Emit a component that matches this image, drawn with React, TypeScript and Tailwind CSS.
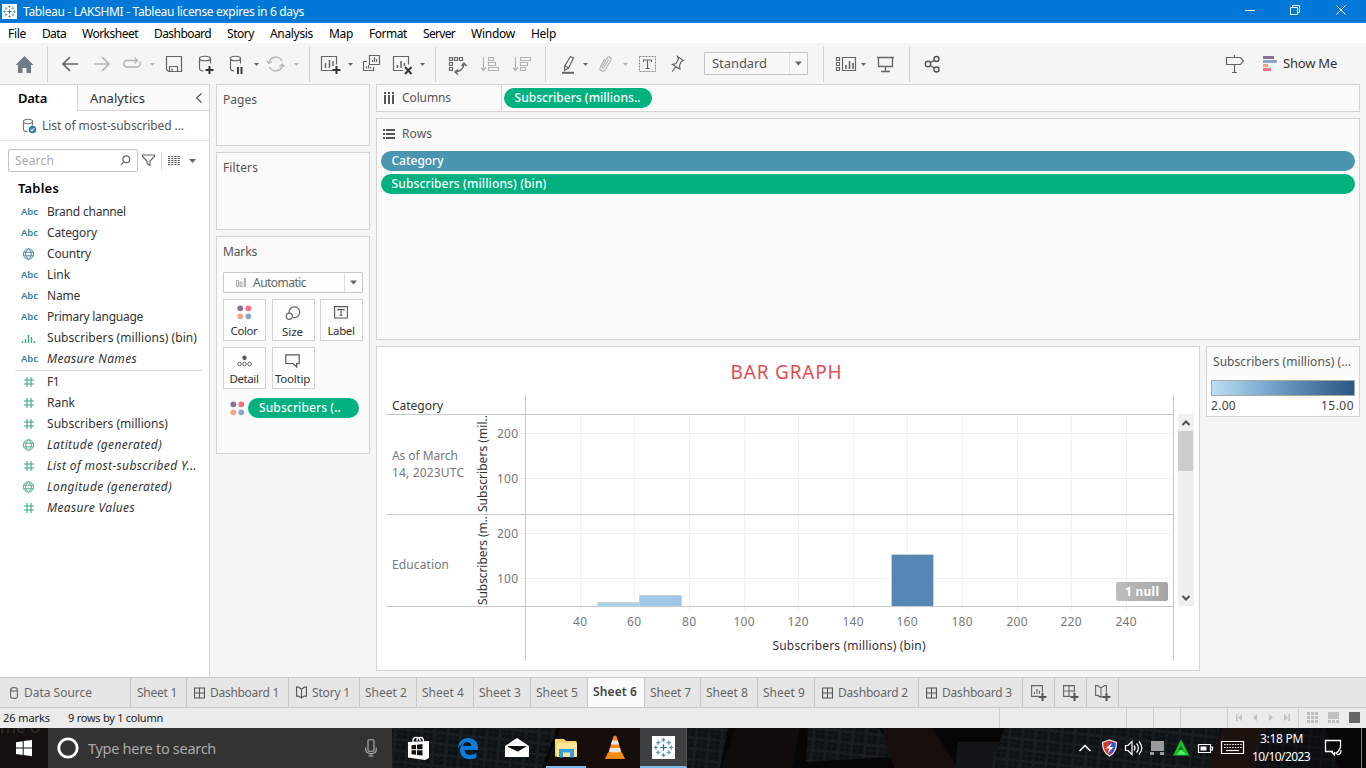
import { useLayoutEffect, useRef, useState } from "react";
import type { ReactNode } from "react";

/* Single-line label whose tracking is adjusted so that it spans `w` pixels. */
function T({ w, className = "", children }: { w: number; className?: string; children: string }) {
  const ref = useRef<HTMLSpanElement>(null);
  const [spacing, setSpacing] = useState(0);
  useLayoutEffect(() => {
    if (ref.current) {
      const natural = ref.current.getBoundingClientRect().width;
      setSpacing((w - natural) / children.length);
    }
  }, []);
  return (
    <span className={"block shrink-0 whitespace-nowrap " + className} style={{ width: w }}>
      <span ref={ref} className="inline-block whitespace-pre" style={{ letterSpacing: spacing }}>
        {children}
      </span>
    </span>
  );
}

/* Toolbar slot: spans x..x+w of the toolbar, its drawing uses toolbar coordinates. */
function Slot({ x, w, children }: { x: number; w: number; children: ReactNode }) {
  return (
    <svg className="block shrink-0" width={w} height={41} viewBox={`${x} 43 ${w} 41`} fill="none" stroke="#666" strokeWidth="1.2">
      {children}
    </svg>
  );
}
const Sep = ({ x }: { x: number }) => <path d={`M${x + 0.5} 47V82`} stroke="#d0d0d0" strokeWidth="1" />;
const Caret = ({ x, c = "#666" }: { x: number; c?: string }) => <path d={`M${x} 63h5l-2.500 3z`} fill={c} stroke="none" />;

function TableauMark({ size }: { size: number }) {
  const plus = (x: number, y: number, r: number, c: string, k: string) => (
    <path key={k} d={`M${x - r} ${y}h${2 * r}M${x} ${y - r}v${2 * r}`} stroke={c} strokeWidth="1.3" />
  );
  return (
    <svg className="block shrink-0 bg-white" width={size} height={size} viewBox="0 0 24 24" fill="none">
      {plus(12, 12, 3.5, "#2c6a99", "c")}
      {plus(12, 4, 2, "#4f89b4", "n")}
      {plus(12, 20, 2, "#4f89b4", "s")}
      {plus(4, 12, 2, "#4f89b4", "w")}
      {plus(20, 12, 2, "#4f89b4", "e")}
      {plus(6.5, 6.8, 2.2, "#5f95bd", "nw")}
      {plus(17.5, 6.8, 2.2, "#5f95bd", "ne")}
      {plus(6.5, 17.2, 2.2, "#5f95bd", "sw")}
      {plus(17.5, 17.2, 2.2, "#5f95bd", "se")}
    </svg>
  );
}

function TitleBar() {
  return (
    <header className="flex h-[23px] items-center bg-[#0078d7] pl-[2px] text-white">
      <TableauMark size={15} />
      <T w={281} className="ml-[6px] text-[12px] leading-[22px]">Tableau - LAKSHMI - Tableau license expires in 6 days</T>
      <div className="flex-1" />
      <svg className="block h-[23px] w-[138px]" viewBox="1228 0 138 23" fill="none" stroke="#fff" strokeWidth="1">
        <path d="M1245 10.500h10M1290.500 7.500h7v7h-7zM1292.500 7.500v-2h7v7h-2M1336.500 5.500l9 9M1345.500 5.500l-9 9" />
      </svg>
    </header>
  );
}

const menus: [string, number][] = [
  ["File", 18], ["Data", 24], ["Worksheet", 56], ["Dashboard", 57], ["Story", 27], ["Analysis", 43],
  ["Map", 24], ["Format", 38], ["Server", 32], ["Window", 44], ["Help", 25],
];

function MenuBar() {
  return (
    <nav className="flex h-[20px] gap-4 bg-white pl-2 text-[12px] leading-[22px] text-black">
      {menus.map(([m, w]) => <T key={m} w={w}>{m}</T>)}
    </nav>
  );
}

function Toolbar() {
  const light = "#b4b4b4";
  return (
    <div className="flex h-[41px] bg-[#f5f5f5]">
      <Slot x={0} w={48}>
        <path d="M24.500 56l9 9h-2.500v8h-4.500v-5h-4v5h-4.500v-8h-2.500z" fill="#6f7a87" stroke="none" />
        <Sep x={47} />
      </Slot>
      <Slot x={48} w={38}><path d="M78 64H63M70 57l-7 7 7 7" strokeWidth="1.700" /></Slot>
      <Slot x={86} w={30}><path d="M94 64h15M102 57l7 7-7 7" stroke={light} strokeWidth="1.600" /></Slot>
      <Slot x={116} w={44}>
        <path d="M131 60.500h-4.500a3.300 3.300 0 0 0 0 6.500h10.500a3.300 3.300 0 0 0 2.500-5.500M131 60.500h5.500M134.500 57.500l3 3-3 3" stroke={light} strokeWidth="1.300" />
        <Caret x={150} c={light} />
      </Slot>
      <Slot x={160} w={30}><path d="M166.500 56.500h15v15h-13l-2-2zM169.500 71v-4.500h8V71M172 71v-2.500" /></Slot>
      <Slot x={190} w={32}>
        <path d="M199.500 58.500v10c0 1.500 1.500 2.200 4 2.500M210.500 58.500v5M199.500 58.500c0-3 11-3 11 0s-11 3-11 0z" />
        <path d="M209.500 66v8M205.500 70h8" stroke="#333" strokeWidth="2" />
      </Slot>
      <Slot x={222} w={40}>
        <path d="M230.500 58.500v10c0 1.500 1 2.200 3.500 2.500M240.500 58.500v5M230.500 58.500c0-3 10-3 10 0s-10 3-10 0z" />
        <path d="M238 67v7M241.500 67v7" stroke="#333" strokeWidth="1.900" />
        <Caret x={254} />
      </Slot>
      <Slot x={262} w={48}>
        <path d="M269 62.500a7 7 0 0 1 13-1.500M282.500 65.500a7 7 0 0 1-13 1.500M267 61l2 2.500 3-2M279.500 66.500l3-2.500 2 3" stroke={light} strokeWidth="1.300" />
        <Caret x={294} c={light} />
        <Sep x={309} />
      </Slot>
      <Slot x={310} w={48}>
        <path d="M333 70.500h-11.500v-14h15v8" />
        <path d="M325.500 68v-5M329.500 68v-8M333 66v-5" strokeWidth="1.500" />
        <path d="M336.500 66v8M332.500 70h8" stroke="#333" strokeWidth="2" />
        <Caret x={348} />
      </Slot>
      <Slot x={358} w={28}>
        <path d="M369.500 55.500h10v9h-10zM367 61.500h-3.500v9h10V67M372.500 62v-2M374.500 62v-5M376.500 62v-3M366.500 68.500v-2M368.500 68.500V65M370.500 68.500V67" />
      </Slot>
      <Slot x={386} w={50}>
        <path d="M403 70.500h-9.500v-14h15v8" />
        <path d="M397.500 68v-3M401 68v-7M404.500 66v-3" strokeWidth="1.500" />
        <path d="M405 67l6.500 7M411.500 67l-6.500 7" stroke="#333" strokeWidth="1.900" />
        <Caret x={420} />
        <Sep x={435} />
      </Slot>
      <Slot x={436} w={38}>
        <path d="M449.500 57.500h3v3h-3zM454.500 57.500h3v3h-3zM459.500 57.500h3v3h-3zM449.500 62.500h3v3h-3zM449.500 67.500h3v3h-3z" />
        <path d="M464 64c-.5 5-4 7.500-8.500 8M461.500 66l2.500-3 2.500 3M458 69.500l-3 2.500 3 2.500" strokeWidth="1.400" />
      </Slot>
      <Slot x={474} w={32}>
        <path d="M483.500 57v13M481 67.500l2.500 3 2.500-3M488.500 57.500h5v3h-5zM488.500 62.500h7v3h-7zM488.500 67.500h10v3h-10z" stroke={light} />
      </Slot>
      <Slot x={506} w={40}>
        <path d="M515.500 57v13M513 67.500l2.500 3 2.500-3M520.500 57.500h10v3h-10zM520.500 62.500h7v3h-7zM520.500 67.500h5v3h-5z" stroke={light} />
        <Sep x={545} />
      </Slot>
      <Slot x={546} w={46}>
        <path d="M570.500 56.500l3 1.500-5 10-4 2.500.2-4.500zM564.700 65.500l3.800 2.500" />
        <path d="M562 72.800h12" strokeWidth="2" />
        <Caret x={583} />
      </Slot>
      <Slot x={592} w={42}>
        <path d="M608.500 59.500l-4.500 8c-.8 1.200-2.200.4-1.600-.8l4.500-8.500c1.500-2.500 5-1 3.800 1.800l-5.200 9.500c-2 3-6.500 1.500-5.300-2l4.600-8.500" stroke={light} />
        <Caret x={623} c={light} />
      </Slot>
      <Slot x={634} w={28}>
        <path d="M639.500 56.500h16v15h-16z" strokeDasharray="2 1" stroke="#888" strokeWidth="1" />
        <path d="M643.500 62v-2h8v2M647.500 60v8M645.500 68.500h4" />
      </Slot>
      <Slot x={662} w={42}>
        <path d="M677.500 56.500l6 4-2 .8-2 4 .5 3.700-7.500-4.500 3.500-1 2.500-4.500zM676 66.500l-4 5" />
      </Slot>
      <div className="mt-[9px] flex h-[23px] w-[104px] rounded-[1px] border border-[#c4c4c4] bg-[#f8f8f8]">
        <div className="pl-[7px]"><T w={55} className="text-[13px] leading-[20px] text-[#555]">Standard</T></div>
        <div className="ml-[22px] flex flex-1 items-center justify-center border-l border-[#e0e0e0]">
          <svg className="block h-[5px] w-[7px]" viewBox="0 0 7 5"><path d="M0 .5h7L3.500 4.500z" fill="#666" /></svg>
        </div>
      </div>
      <Slot x={808} w={16}><Sep x={823} /></Slot>
      <Slot x={824} w={48}>
        <path d="M836.500 57.500h3v3h-3zM836.500 62.500h3v3h-3zM836.500 67.500h3v3h-3zM842.500 57.500h13v13h-13z" />
        <path d="M846 69v-4M849.500 69v-8M853 69v-6" strokeWidth="1.600" />
        <Caret x={861} />
      </Slot>
      <Slot x={872} w={38}>
        <path d="M877 57.500h17M878.500 57.500v9h14v-9M885.500 66.500v5M881 71.500h9" strokeWidth="1.300" />
        <Sep x={909} />
      </Slot>
      <Slot x={910} w={40}>
        <g stroke="#555" strokeWidth="1.400">
          <circle cx="928" cy="64" r="2.700" /><circle cx="936.500" cy="59" r="2.500" /><circle cx="936.500" cy="69.500" r="2.500" />
          <path d="M930.500 62.500l3.800-2.200M930.300 65.500l4 2.500" />
        </g>
      </Slot>
      <div className="flex-1" />
      <Slot x={1222} w={30}><path d="M1234.500 55v2.500M1226.500 57.500h14l3 3.500-3 3.500h-14zM1234.500 64.500v7.500M1232 72.500h5" /></Slot>
      <Slot x={1252} w={31}>
        <g stroke="none">
          <path d="M1263 56h11v3h-11z" fill="#8a7199" /><path d="M1263 60h14v3h-14z" fill="#86a5cf" />
          <path d="M1263 64h5v3h-5z" fill="#f4a77e" /><path d="M1263 68h8v3h-8z" fill="#f8707f" />
        </g>
      </Slot>
      <T w={54} className="mr-[29px] text-[13px] leading-[40px] text-[#333]">Show Me</T>
    </div>
  );
}

type Kind = "abc" | "globe" | "num" | "bin";
function FieldIcon({ kind, green }: { kind: Kind; green?: boolean }) {
  const c = green ? "#3fa67e" : "#3a7f9c";
  if (kind === "abc") return <T w={17} className="pt-px text-[9.500px] font-semibold text-[#3a7f9c]">Abc</T>;
  return (
    <svg className="mt-px block h-[12px] w-[17px] shrink-0" viewBox="0 0 17 12" fill="none" stroke={c} strokeWidth="1.100">
      {kind === "globe" && <path d="M7.500 .8a5.200 5.200 0 1 1 0 10.400a5.200 5.200 0 1 1 0-10.400zM7.500 .8c-3.800 3-3.800 7.400 0 10.400c3.800-3 3.800-7.400 0-10.400M3 4.200h9M3 7.800h9" strokeWidth=".9" />}
      {kind === "num" && <path d="M6 1v10M10 1v10M3 4h10M3 8h10" />}
      {kind === "bin" && <path d="M1.500 9v2M4.500 7v4M7.500 3v8M10.500 5v6M13.500 9v2" strokeWidth="1.400" />}
    </svg>
  );
}

const dims: [Kind, string, number, boolean, boolean][] = [
  ["abc", "Brand channel", 79, false, false], ["abc", "Category", 50, false, false], ["globe", "Country", 44, false, false],
  ["abc", "Link", 23, false, false], ["abc", "Name", 33, false, false], ["abc", "Primary language", 96, false, false],
  ["bin", "Subscribers (millions) (bin)", 150, true, false], ["abc", "Measure Names", 90, false, true],
];
const meas: [Kind, string, number, boolean, boolean][] = [
  ["num", "F1", 12, true, false], ["num", "Rank", 28, true, false], ["num", "Subscribers (millions)", 121, true, false],
  ["globe", "Latitude (generated)", 115, true, true], ["num", "List of most-subscribed Y...", 150, true, true],
  ["globe", "Longitude (generated)", 125, true, true], ["num", "Measure Values", 88, true, true],
];

function FieldList({ items }: { items: typeof dims }) {
  return (
    <ul>
      {items.map(([k, name, w, g, it]) => (
        <li key={name} className="flex h-[21px] items-center pl-[21px]">
          <FieldIcon kind={k} green={g} />
          <T w={w} className={it ? "ml-[9px] text-[12px] leading-[18px] text-[#333] italic" : "ml-[9px] text-[12px] leading-[18px] text-[#333]"}>{name}</T>
        </li>
      ))}
    </ul>
  );
}

function DataPane() {
  return (
    <aside className="flex w-[210px] shrink-0 flex-col border-t border-r border-[#d4d4d4] bg-white">
      <div className="flex h-[26px] text-[13px] leading-[26px]">
        <div className="w-[77px] pl-[18px] text-black"><T w={29} className="font-semibold">Data</T></div>
        <div className="flex flex-1 items-center border-b border-l border-[#d4d4d4] bg-[#fafafa] pl-[12px] text-[#333]">
          <T w={55}>Analytics</T>
          <svg className="ml-[50px] block h-[10px] w-[8px]" viewBox="0 0 8 10" fill="none" stroke="#555" strokeWidth="1.200"><path d="M6.500 .5L1.500 5l5 4.500" /></svg>
        </div>
      </div>
      <div className="flex h-[30px] items-center border-b border-[#e0e0e0] pl-[22px]">
        <svg className="block h-[16px] w-[15px]" viewBox="0 0 15 16" fill="none" stroke="#777" strokeWidth="1.100">
          <path d="M1.500 3.500v8c0 1.500 1.500 2 4 2M10.500 3.500v4M1.500 3.500c0-3 9-3 9 0s-9 3-9 0z" />
          <circle cx="10.500" cy="11.500" r="3.800" fill="#2f7f9f" stroke="none" />
          <path d="M8.700 11.500l1.300 1.300 2.300-2.500" stroke="#fff" />
        </svg>
        <T w={142} className="ml-[5px] text-[12px] text-[#555]">List of most-subscribed ...</T>
      </div>
      <div className="mt-[8px] flex h-[23px] items-center pl-[8px]">
        <div className="flex h-[23px] w-[130px] items-center rounded-[2px] border border-[#c4c4c4] pl-[6px]">
          <T w={39} className="text-[12px] leading-[20px] text-[#aaa]">Search</T>
          <svg className="ml-[66px] block h-[11px] w-[11px]" viewBox="0 0 11 11" fill="none" stroke="#666" strokeWidth="1.200"><circle cx="6.300" cy="4.300" r="3.400" /><path d="M3.800 6.800L.8 9.800" /></svg>
        </div>
        <svg className="ml-[4px] block h-[13px] w-[13px]" viewBox="0 0 13 13" fill="none" stroke="#666" strokeWidth="1.200"><path d="M.6 1h11.800v1.500L8 7v4.500L5 9.500V7L.6 2.500z" /></svg>
        <div className="ml-[6px] h-[18px] w-px bg-[#d4d4d4]" />
        <svg className="ml-[6px] block h-[10px] w-[29px]" viewBox="0 0 29 10" fill="none" stroke="#555"><path d="M0 .5h12M0 2.500h12M0 4.500h12M0 6.500h12M0 8.500h12" strokeDasharray="2.200 1" /><path d="M21 3h7l-3.500 4z" fill="#666" stroke="none" /></svg>
      </div>
      <div className="mt-[5px] mb-[2px] pl-[18px] text-[13px] leading-[22px] text-black"><T w={41} className="font-semibold">Tables</T></div>
      <FieldList items={dims} />
      <div className="ml-[15px] mt-px h-px w-[187px] bg-[#d8d8d8]" />
      <FieldList items={meas} />
    </aside>
  );
}

const Dots = () => (
  <svg className="block h-[15px] w-[15px] shrink-0" viewBox="0 0 15 15">
    <circle cx="3.300" cy="3.300" r="2.900" fill="#8a7199" /><circle cx="11.300" cy="3.300" r="2.900" fill="#f8707f" />
    <circle cx="3.300" cy="11.300" r="2.900" fill="#f4a77e" /><circle cx="11.300" cy="11.300" r="2.900" fill="#86a5cf" />
  </svg>
);

function MarkButton({ label, w, children }: { label: string; w: number; children: ReactNode }) {
  return (
    <div className="flex h-[42px] flex-col items-center border border-[#d4d4d4] bg-[#fdfdfd] pt-[5px] pr-px">
      <div className="flex h-[17px] items-center">{children}</div>
      <T w={w} className="mt-[2px] text-[11.500px] leading-[18px] text-[#333]">{label}</T>
    </div>
  );
}

function Shelves() {
  const card = "border border-[#d4d4d4] bg-[#fafafa] pl-[6px]";
  return (
    <div className="ml-[6px] flex w-[154px] shrink-0 flex-col gap-[6px] text-[12px] leading-[30px] text-[#555]">
      <section className={"h-[62px] " + card}><T w={34}>Pages</T></section>
      <section className={"h-[78px] " + card}><T w={35}>Filters</T></section>
      <section className={"h-[218px] " + card}>
        <T w={34}>Marks</T>
        <div className="mt-[5px] flex h-[21px] w-[140px] items-center rounded-[1px] border border-[#c8c8c8] bg-[#fdfdfd] text-[#666]">
          <svg className="ml-[12px] block h-[11px] w-[10px]" viewBox="0 0 10 11" fill="none" stroke="#aaa"><path d="M.5 3.500h2v6h-2zM4 5h2v4.500H4z" /><path d="M8.800 1v9" strokeWidth="2" /></svg>
          <T w={53} className="ml-[7px] leading-[20px]">Automatic</T>
          <div className="ml-auto flex h-full w-[18px] items-center justify-center border-l border-[#ddd]">
            <svg className="block h-[5px] w-[7px]" viewBox="0 0 7 5"><path d="M0 .5h7L3.500 4.500z" fill="#666" /></svg>
          </div>
        </div>
        <div className="mt-[6px] grid grid-cols-[43px_43px_43px] gap-[6px] gap-x-[5.500px]">
          <MarkButton label="Color" w={27}><Dots /></MarkButton>
          <MarkButton label="Size" w={21}>
            <svg className="block h-[16px] w-[16px]" viewBox="0 0 16 16" fill="none" stroke="#666" strokeWidth="1.200"><path d="M4 8a5.400 5.400 0 1 1 4 4.500" /><circle cx="4.300" cy="11.300" r="3.100" /></svg>
          </MarkButton>
          <MarkButton label="Label" w={27}>
            <svg className="block h-[13px] w-[14px]" viewBox="0 0 14 13" fill="none" stroke="#555" strokeWidth="1.100"><path d="M.6.600h12.800v11.400H.6zM4 4.800V3.500h6v1.300M7 3.500v5.500M5.500 9.300h3" /></svg>
          </MarkButton>
          <MarkButton label="Detail" w={29}>
            <svg className="block h-[12px] w-[15px]" viewBox="0 0 15 12" fill="none" stroke="#666"><circle cx="7.500" cy="2.800" r="2.200" fill="#555" stroke="none" /><circle cx="2.500" cy="9" r="1.800" /><circle cx="7.500" cy="9" r="1.800" /><circle cx="12.500" cy="9" r="1.800" /></svg>
          </MarkButton>
          <MarkButton label="Tooltip" w={35}>
            <svg className="block h-[14px] w-[15px]" viewBox="0 0 15 14" fill="none" stroke="#555" strokeWidth="1.200"><path d="M.8.800h13.400v8.700h-2.500v3.500L8 9.500H.8z" /></svg>
          </MarkButton>
        </div>
        <div className="mt-[9px] ml-[7px] flex h-[20px] items-center gap-[3px]">
          <Dots />
          <div className="h-[20px] w-[111px] rounded-full bg-[#00b180] pl-[11px] leading-[20px] text-white"><T w={82} className="font-medium">Subscribers (..</T></div>
        </div>
      </section>
    </div>
  );
}

const ticks: [number, number][] = [[580, 40], [634, 60], [689, 80], [744, 100], [798, 120], [853, 140], [907, 160], [962, 180], [1017, 200], [1071, 220], [1126, 240]];

function Chart() {
  return (
    <svg className="block shrink-0" width="800" height="276" viewBox="377 394 800 276" fontSize="12" fill="#787878">
      <g stroke="#f0f0f0">
        {ticks.map(([x]) => <path key={x} d={`M${x + 0.5} 415V610`} />)}
        {[433.5, 478.5, 533.5, 578.5].map((y) => <path key={y} d={`M520 ${y}H1173`} />)}
      </g>
      <g stroke="#d0d0d0">
        <path d="M597.500 606v-3.500h42V606" fill="#a9d2ee" />
        <path d="M639.500 606v-10.500h42V606" fill="#9fc8e8" />
        <path d="M891.500 606v-51.500h42V606" fill="#5686b6" />
      </g>
      <g stroke="#c9c9c9">
        <path d="M386 414.500h788M386 514.500h788M386 606.500h788M525.500 394v267M1173.500 394v267" />
      </g>
      {ticks.map(([x, v]) => <text key={v} x={x} y="626" textAnchor="middle" textLength={v > 99 ? 21 : 14}>{v}</text>)}
      <text x="497" y="438" textLength="21">200</text>
      <text x="497" y="483" textLength="21">100</text>
      <text x="497" y="538" textLength="21">200</text>
      <text x="497" y="583" textLength="21">100</text>
      <text x="392" y="410" textLength="51" fill="#333">Category</text>
      <text x="392" y="460" textLength="66">As of March</text>
      <text x="392" y="477" textLength="72">14, 2023UTC</text>
      <text x="392" y="569" textLength="57">Education</text>
      <text x="772.500" y="650" textLength="153" fill="#333">Subscribers (millions) (bin)</text>
      <text transform="translate(487 512) rotate(-90)" textLength="97" fill="#333">Subscribers (mil..</text>
      <text transform="translate(487 605) rotate(-90)" textLength="89" fill="#333">Subscribers (m..</text>
      <rect x="1116" y="582" width="52" height="19" rx="2.500" fill="url(#nullFill)" />
      <text x="1125" y="596" textLength="34" fontWeight="700" fill="#fff">1 null</text>
      <defs><linearGradient id="nullFill"><stop stopColor="#bdbdbd" /><stop offset="1" stopColor="#a5a5a5" /></linearGradient></defs>
    </svg>
  );
}

function Workspace() {
  return (
    <main className="ml-[6px] flex w-[984px] shrink-0 flex-col gap-[6px] text-[12px] text-[#555]">
      <section className="flex h-[28px] border border-[#d4d4d4] bg-[#fafafa] leading-[26px]">
        <div className="flex w-[125px] items-center border-r border-[#d4d4d4] pl-[7px]">
          <svg className="block h-[12px] w-[10px]" viewBox="0 0 10 12" fill="none" stroke="#555" strokeWidth="2"><path d="M1 0v2M5 0v2M9 0v2M1 3v9M5 3v9M9 3v9" /></svg>
          <T w={49} className="ml-[8px]">Columns</T>
        </div>
        <div className="mt-[3px] ml-[2px] h-[20px] w-[148px] rounded-full bg-[#00b180] pl-[10.500px] leading-[20px] text-white"><T w={126} className="font-medium">Subscribers (millions..</T></div>
      </section>
      <section className="h-[222px] border border-[#d4d4d4] bg-[#fafafa] px-[4px]">
        <div className="flex h-[32px] items-center pb-[3px] pl-[2px]">
          <svg className="block h-[10px] w-[12px]" viewBox="0 0 12 10" fill="none" stroke="#555" strokeWidth="2"><path d="M0 1h2M0 5h2M0 9h2M3 1h9M3 5h9M3 9h9" /></svg>
          <T w={30} className="ml-[7px] leading-[26px]">Rows</T>
        </div>
        <div className="h-[20px] rounded-full bg-[#4996b2] pl-[10.500px] leading-[20px] text-white"><T w={52} className="font-medium">Category</T></div>
        <div className="mt-[3px] h-[20px] rounded-full bg-[#00b180] pl-[10.500px] leading-[20px] text-white"><T w={155} className="font-medium">Subscribers (millions) (bin)</T></div>
      </section>
      <div className="flex items-start gap-[6px]">
        <section className="h-[325px] w-[824px] border border-[#d4d4d4] bg-white">
          <div className="h-[47px] pl-[353.500px] text-[19px] leading-[50px] text-[#df4e55]"><T w={112}>BAR GRAPH</T></div>
          <div className="flex">
            <Chart />
            <div className="mt-[20px] ml-px flex h-[192px] w-[16px] flex-col bg-[#f0f0f0]">
              <svg className="block h-[17px] w-[16px]" viewBox="0 0 16 17" fill="none" stroke="#505050" strokeWidth="2"><path d="M4.500 11l3.500-3.500 3.500 3.500" /></svg>
              <div className="h-[40px] w-[15px] bg-[#cdcdcd]" />
              <svg className="mt-auto block h-[17px] w-[16px]" viewBox="0 0 16 17" fill="none" stroke="#505050" strokeWidth="2"><path d="M4.500 7l3.500 3.500L11.500 7" /></svg>
            </div>
          </div>
        </section>
        <section className="h-[71px] w-[154px] border border-[#d4d4d4] bg-white">
          <div className="h-[29px] bg-[#fafafa] pl-[6px] leading-[30px]"><T w={138}>Subscribers (millions) (...</T></div>
          <div className="mt-[4px] ml-[4px] h-[16px] w-[144px] border border-[#aaa89a] bg-linear-to-r from-[#bce0f4] via-[#75a6cd] via-40% to-[#2a5783]" />
          <div className="flex justify-between pr-[5px] pl-[4px] leading-[20px] text-[#444]"><T w={25}>2.00</T><T w={33}>15.00</T></div>
        </section>
      </div>
    </main>
  );
}

type TabKind = "sheet" | "dash" | "story" | "source" | "active";
const tabs: [string, string, number, TabKind][] = [
  ["Data Source", "w-[131px] pl-[10px]", 68, "source"], ["Sheet 1", "w-[56px] pl-[6px]", 40, "sheet"], ["Dashboard 1", "w-[102px] pl-[7px]", 69, "dash"],
  ["Story 1", "w-[71px] pl-[7px]", 38, "story"], ["Sheet 2", "w-[57px] pl-[5px]", 42, "sheet"], ["Sheet 4", "w-[57px] pl-[5px]", 42, "sheet"],
  ["Sheet 3", "w-[57px] pl-[5px]", 42, "sheet"], ["Sheet 5", "w-[57px] pl-[5px]", 42, "sheet"], ["Sheet 6", "w-[57px] pl-[5px]", 44, "active"],
  ["Sheet 7", "w-[56px] pl-[5px]", 41, "sheet"], ["Sheet 8", "w-[57px] pl-[5px]", 42, "sheet"], ["Sheet 9", "w-[57px] pl-[5px]", 42, "sheet"],
  ["Dashboard 2", "w-[104px] pl-[7px]", 70, "dash"], ["Dashboard 3", "w-[104px] pl-[7px]", 70, "dash"],
];
const gridPath = "M.6.600h10.800v10.800H.6zM6 .6v10.800M.6 6h10.800";
const bookPath = "M.6.600h2L6 3l3.400-2.400h2v9.800h-2L6 12.300l-3.400-1.900h-2zM6 3v9";

function SheetTabs() {
  return (
    <div className="flex h-[31px] border-y border-[#c8c8c8] bg-[#e6e6e6] text-[12px] leading-[30px] text-[#666]">
      {tabs.map(([name, box, w, kind]) => (
        <div key={name} className={"flex shrink-0 items-center border-r border-[#c8c8c8] " + box + (kind === "active" ? " bg-[#fbfbfb] pb-[2px] font-semibold leading-[26px] text-[#444]" : "")}>
          {kind === "source" && <svg className="mr-[6px] block h-[12px] w-[8px]" viewBox="0 0 8 12" fill="none" stroke="#666" strokeWidth="1.100"><path d="M.6 2.500v7c0 2.500 6.800 2.500 6.800 0v-7M.6 2.500c0-2.500 6.800-2.500 6.800 0s-6.800 2-6.800 0z" /></svg>}
          {kind === "dash" && <svg className="mr-[5px] block h-[12px] w-[11px]" viewBox="0 0 12 12" fill="none" stroke="#555" strokeWidth="1.200"><path d={gridPath} /></svg>}
          {kind === "story" && <svg className="mr-[5px] block h-[13px] w-[11px]" viewBox="0 0 12 13" fill="none" stroke="#555" strokeWidth="1.200"><path d={bookPath} /></svg>}
          <T w={w}>{name}</T>
        </div>
      ))}
      {["M.6.600h10.800v10.800H.6zM3.500 9V7M6 9V4M8.500 9V5.500", gridPath, bookPath].map((d) => (
        <div key={d} className="flex w-[32px] shrink-0 items-center justify-center border-r border-[#c8c8c8]">
          <svg className="block h-[16px] w-[16px]" viewBox="0 0 16 16" fill="none" stroke="#666" strokeWidth="1.100">
            <path d={d} /><path d="M11.500 7.500v8M7.500 11.500h8" stroke="#e6e6e6" strokeWidth="4" /><path d="M11.500 8v8M7.500 12h8" strokeWidth="2" stroke="#555" />
          </svg>
        </div>
      ))}
    </div>
  );
}

function StatusBar() {
  return (
    <div className="flex h-[20px] bg-[#ebebeb] pl-[3px] text-[11px] leading-[20px] text-[#222]">
      <T w={47}>26 marks</T>
      <T w={95} className="ml-[18px]">9 rows by 1 column</T>
      <svg className="ml-auto block" width="376" height="20" viewBox="990 708 376 20" fill="#c0c0c0">
        <path d="M999.500 708v20M1126.500 708v20M1153.500 708v20M1180.500 708v20M1227.500 708v20M1298.500 708v20" stroke="#cdcdcd" />
        <path d="M1236 714h1.500v7h-1.500zM1242 714v7l-4-3.500zM1257 714v7l-4-3.500zM1269 714v7l4-3.500zM1284 714v7l4-3.500zM1288.500 714h1.500v7h-1.500z" />
        <path d="M1307 712h3v3h-3zM1311 712h3v3h-3zM1315 712h3v3h-3zM1307 716h3v3h-3zM1311 716h3v3h-3zM1315 716h3v3h-3zM1307 720h3v3h-3zM1311 720h3v3h-3zM1315 720h3v3h-3z" />
        <path d="M1328 712h11v7h-11zM1328 720h3v3h-3zM1332 720h3v3h-3zM1336 720h3v3h-3z" />
        <path d="M1349 712h11v11h-11z" fill="#666" />
      </svg>
    </div>
  );
}

function Wallpaper() {
  return (
    <svg className="absolute inset-0 block h-full w-full" viewBox="0 0 1366 40" preserveAspectRatio="none">
      <defs>
        <pattern id="plaid" width="13" height="11" patternUnits="userSpaceOnUse" patternTransform="rotate(6)">
          <rect width="13" height="11" fill="#0d1114" /><path d="M0 3h13M4 0v11" stroke="#1c2327" strokeWidth="2.500" opacity=".7" /><path d="M0 8h13M10 0v11" stroke="#151b1f" />
        </pattern>
      </defs>
      <rect width="1366" height="40" fill="#060606" />
      <rect width="48" height="40" fill="#15100e" />
      <text x="0" y="4.500" fontSize="17" fill="#322b28">me o</text>
      <path d="M392 0h165l-15 40H392z" fill="url(#plaid)" />
      <path d="M560 0h80v40h-95z" fill="#150d0a" />
      <path d="M686 0h42l-8 40h-34z" fill="url(#plaid)" />
      <path d="M735 0h65l-8 40h-70z" fill="#110b09" />
      <path d="M808 0h70l25 28-97 6z" fill="url(#plaid)" />
      <path d="M882 0h50l26 40h-64z" fill="#170d0a" />
      <path d="M958 14h47l-14 26h-36z" fill="#131616" />
      <path d="M1005 0h215l-8 40H990z" fill="url(#plaid)" />
      <path d="M1222 0h44l-12 40h-46z" fill="#1c110d" />
      <path d="M1260 0h66l12 40h-86z" fill="url(#plaid)" opacity=".6" />
    </svg>
  );
}

function Taskbar() {
  return (
    <footer className="relative h-[40px] overflow-hidden bg-black text-white">
      <Wallpaper />
      <div className="relative flex h-[40px]">
        <svg className="block h-[40px] w-[48px] shrink-0" viewBox="0 728 48 40" fill="#fff"><path d="M16 742.300l6.700-1v6.300H16zM23.700 741.100l8.300-1.100v7.600h-8.300zM16 748.600h6.700v6.300l-6.700-1zM23.700 748.600H32v7.600l-8.300-1.200z" /></svg>
        <div className="flex w-[344px] shrink-0 items-center bg-[#333]">
          <svg className="ml-[9px] block h-[22px] w-[22px]" viewBox="0 0 22 22" fill="none" stroke="#fff" strokeWidth="2.800"><circle cx="11" cy="11" r="9.200" /></svg>
          <T w={128} className="ml-[9px] text-[14.500px] leading-[38px] text-[#a9a9a9]">Type here to search</T>
          <svg className="ml-auto mr-[15px] block h-[18px] w-[12px]" viewBox="0 0 12 18" fill="none" stroke="#b0b0b0" strokeWidth="1.100"><rect x="3" y=".8" width="6" height="11.400" rx="1" /><path d="M.8 8.500v2.500c0 2.500 1.500 3.500 5.200 3.500s5.200-1 5.200-3.500V8.500M6 14.500V17M3.500 17h5" /></svg>
        </div>
        <svg className="block h-[40px] w-[248px] shrink-0" viewBox="392 728 248 40" fill="none">
          <path d="M413 742v-2c0-3 6-4 7 0v1M417 741v-1.500c0-3 6.500-3 6.500 1v2" stroke="#fff" strokeWidth="1.300" />
          <path d="M408 742l21-1v17l-4 2-17-2.500z" fill="#fff" />
          <path d="M411.500 745.300l4.500-.5v4.500h-4.500zM417 744.700l5.500-.6v5.200H417zM411.500 750.300h4.500v4.500l-4.500-.5zM417 750.300h5.500v5.200l-5.500-.6z" fill="#111" />
          <path d="M458 748.500c.3-6.500 4.500-10.500 10.300-10.500 6.200 0 9.700 4.500 9.700 9.500v2.500h-13.500c.2 5.500 7.500 6 12 3v4.600c-7.500 3.500-16.500.9-16.500-7.100 0-4 2-6.700 4.500-8-1.200 1.500-1.300 3-1.300 3.500h8.300c0-5.700-9.500-5-13.500 2.500z" fill="#0c7cd8" />
          <path d="M505 746l12-8 12 8v11h-24z" fill="#fff" />
          <path d="M508 746h19l-9 5.500 5 2.500-15-7z" fill="#111" />
          <path d="M546 766h40v2h-40z" fill="#76b9ed" />
          <path d="M555 739h9l2 2h10.500v15.500H555z" fill="#f6d36b" /><path d="M557 743h20v14h-20z" fill="#ffe79a" />
          <path d="M559 749h15v8.500h-4v-5h-7v5h-4z" fill="#2f9fe0" />
          <path d="M608 752.500h14l3 6.500h-20z" fill="#f08a0c" /><path d="M613.500 736.500c1-1.300 2-1.300 3 0l5.500 17.500c-4 2.500-10 2.500-14 0z" fill="#f58b10" />
          <path d="M612.200 740.500h5.600l1.300 4h-8.200zM610 748h10l1 3.500c-4 1.300-8 1.300-12 0z" fill="#e8e8e8" />
        </svg>
        <div className="flex w-[47px] shrink-0 flex-col items-center border-r border-[#555] border-b-2 border-b-[#76b9ed] bg-[#3e4042] pt-[8px]"><TableauMark size={23} /></div>
        <div className="flex-1" />
        <svg className="block h-[40px] w-[182px] shrink-0" viewBox="1070 728 182 40" fill="none" stroke="#fff" strokeWidth="1.200">
          <path d="M1079.500 751l5.500-5.500 5.500 5.500" strokeWidth="1.500" />
          <path d="M1109.500 740l7 2.500c0 7-2 11-7 13.500-5-2.500-7-6.500-7-13.500z" fill="#df3328" stroke="#e8e8f0" strokeWidth="1.300" />
          <path d="M1109.500 741.500l6 2c-.3 5-1.500 8.500-6 11z" fill="#2d57c8" stroke="none" /><path d="M1112 743l-6.500 5.500h4l-2 5 6-6.500h-3.500z" fill="#fff" stroke="none" />
          <path d="M1125.500 745.500h2.500l4-4v13l-4-4h-2.500zM1134 745.500c1.300 1.500 1.300 3.500 0 5M1136.500 743.500c2.500 2.500 2.500 6.500 0 9M1139 741.500c3.500 4 3.500 9 0 13" />
          <g stroke="none" fill="#9a9a9a"><path d="M1151 741h13v10h-13zM1150 752h4v3h-4zM1160 752h4v3h-4z" /></g>
          <path d="M1181 739.500l8.500 16h-16.500z" fill="#16c022" stroke="none" /><path d="M1181 746l2.500 4h-5z" fill="#0a5f18" stroke="none" /><path d="M1181 749.500l5.500 5h-9.500z" fill="#5df06a" stroke="none" />
          <path d="M1198.500 744.500h12v8h-12zM1211 747h1.500v3h-1.500" /><path d="M1200.500 746.500h6v4h-6z" fill="#fff" stroke="none" />
          <path d="M1221.500 741.500h22v12h-22z" /><path d="M1224 744.500h18M1224 747.500h18" strokeDasharray="1.500 1.200" /><path d="M1226 750.500h13" />
        </svg>
        <div className="w-[58px] shrink-0 pt-[2px] text-[12px] leading-[18px]">
          <div className="pl-[8px]"><T w={43}>3:18 PM</T></div>
          <T w={58}>10/10/2023</T>
        </div>
        <svg className="block h-[40px] w-[56px] shrink-0" viewBox="1310 728 56 40" fill="none" stroke="#fff" strokeWidth="1.300">
          <path d="M1333 751.500h-7.500v-11h15v7M1331 751.500l3.500 3.500v-3M1340.500 747c-1.500 3.500-1.500 5-4.500 6 2 3 5.500 1 5-3" />
          <path d="M1361.500 728v40" stroke="#777" strokeWidth="1" />
        </svg>
      </div>
    </footer>
  );
}

export default function App() {
  return (
    <div className="flex h-[768px] w-[1366px] flex-col overflow-hidden bg-[#f5f5f5] font-['Noto_Sans',sans-serif]">
      <TitleBar />
      <MenuBar />
      <Toolbar />
      <div className="flex h-[593px] shrink-0">
        <DataPane />
        <Shelves />
        <Workspace />
      </div>
      <SheetTabs />
      <StatusBar />
      <Taskbar />
    </div>
  );
}
